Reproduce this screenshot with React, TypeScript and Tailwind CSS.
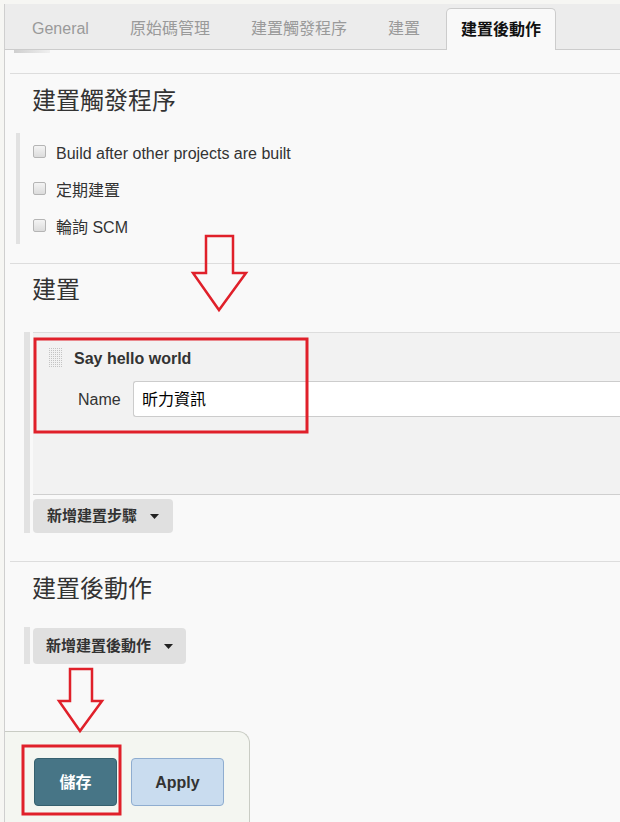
import React from "react";

const font = { fontFamily: '"Liberation Sans", "Noto Sans CJK TC", sans-serif' };

const Caret = () => (
  <svg width="9" height="5" viewBox="0 0 9 5" className="ml-[13px]">
    <path d="M0 0H9L4.5 5Z" fill="#222" />
  </svg>
);

const Checkbox = () => (
  <span className="inline-block h-[13px] w-[13px] rounded-[2px] border border-[#b5b5b5] bg-gradient-to-b from-[#f4f4f4] to-[#dcdcdc]" />
);

const DragHandle = () => (
  <svg width="14" height="20" viewBox="0 0 14 20">
    <defs>
      <pattern id="dots" width="2" height="2" patternUnits="userSpaceOnUse">
        <rect width="1" height="1" fill="#c4c4c4" />
      </pattern>
    </defs>
    <rect width="14" height="20" fill="url(#dots)" />
  </svg>
);

const Annotations = () => (
  <svg
    className="pointer-events-none absolute left-0 top-0"
    width="620"
    height="822"
    viewBox="0 0 620 822"
    fill="none"
    stroke="#e0202a"
  >
    <polygon
      points="206,236 233,236 233,273 246,273 219,310 193,273 206,273"
      strokeWidth="2.5"
    />
    <polygon
      points="70,669 92,669 92,701 102,701 80,731 59,701 70,701"
      strokeWidth="2.5"
    />
    <rect x="35" y="339" width="272" height="93" strokeWidth="3" />
    <rect x="23" y="746" width="97" height="68" strokeWidth="3" />
  </svg>
);

export default function App() {
  const tabs = ["General", "原始碼管理", "建置觸發程序", "建置"];

  return (
    <div className="relative h-[822px] w-[620px] overflow-hidden bg-[#f6f6f3] pt-[4px] pl-[4px]" style={font}>
      <div className="flex h-[818px] flex-col border-l border-[#cfcfcf] bg-[#f9f9f9]">
        {/* tab bar */}
        <div className="flex h-[46px] items-end gap-[11px] border-b border-[#cccccc] bg-[#ececec] pl-[12px]">
          {tabs.map((t) => (
            <div key={t} className="flex h-[41px] items-center px-[15px] text-[16px] text-[#9a9a9a]">
              {t}
            </div>
          ))}
          <div className="-mb-px flex h-[42px] items-center rounded-t-[5px] border border-b-0 border-[#cccccc] bg-[#f9f9f9] px-[14px] text-[16px] font-bold text-[#111]">
            建置後動作
          </div>
        </div>

        <div className="h-[23px] pl-[9px]">
          <div className="h-[3px] w-[36px] bg-gradient-to-r from-[#cfcfcf] to-[#f0f0f0]" />
        </div>

        {/* 建置觸發程序 */}
        <section className="ml-[5px] border-t border-[#dddddd] pt-[11px]">
          <h2 className="pl-[22px] text-[24px] leading-[32px] text-[#333]">建置觸發程序</h2>
          <div className="ml-[6px] mt-[16px] border-l-4 border-[#e2e2e2] pl-[13px]">
            {["Build after other projects are built", "定期建置", "輪詢 SCM"].map((l) => (
              <label key={l} className="flex h-[37px] items-center gap-[10px] text-[16px] text-[#333]">
                <Checkbox />
                <span className="pt-[4px]">{l}</span>
              </label>
            ))}
          </div>
          <div className="h-[19px]" />
        </section>

        {/* 建置 */}
        <section className="ml-[5px] border-t border-[#dddddd] pt-[10px]">
          <h2 className="pl-[22px] text-[24px] leading-[32px] text-[#333]">建置</h2>
          <div className="ml-[14px] mt-[26px] flex">
            <div className="w-[6px] bg-[#e2e2e2]" />
            <div className="ml-[3px] flex-1">
              <div className="h-[163px] border-y border-t-[#dddddd] border-b-[#cfcfcf] bg-[#f2f2f2]">
                <div className="mt-[15px] flex h-[20px] items-center pl-[16px]">
                  <DragHandle />
                  <span className="ml-[11px] pt-[1px] text-[16px] font-bold text-[#333]">Say hello world</span>
                </div>
                <div className="mt-[13px] flex h-[36px] items-center pl-[45px]">
                  <span className="w-[55px] pt-[1px] text-[16px] text-[#333]">Name</span>
                  <div className="flex h-[36px] flex-1 items-center rounded-l-[3px] border border-r-0 border-[#cccccc] bg-white pl-[8px] pt-[1px] text-[16px] text-black">
                    昕力資訊
                  </div>
                </div>
              </div>
              <button className="mt-[4px] flex h-[34px] items-center rounded-[4px] bg-[#e0e0e0] px-[14px] text-[15px] font-bold text-[#333]">
                新增建置步驟
                <Caret />
              </button>
            </div>
          </div>
          <div className="h-[28px]" />
        </section>

        {/* 建置後動作 */}
        <section className="ml-[5px] border-t border-[#dddddd] pt-[11px]">
          <h2 className="pl-[22px] text-[24px] leading-[32px] text-[#333]">建置後動作</h2>
          <div className="ml-[14px] mt-[22px] flex">
            <div className="w-[6px] bg-[#e2e2e2]" />
            <div className="ml-[3px] pt-[1px]">
              <button className="flex h-[36px] items-center rounded-[4px] bg-[#e0e0e0] px-[13px] text-[15px] font-bold text-[#333]">
                新增建置後動作
                <Caret />
              </button>
            </div>
          </div>
        </section>

        {/* bottom sticky bar */}
        <div className="mt-[67px] flex w-[245px] flex-1 gap-[14px] rounded-tr-[12px] border-r border-t border-[#c9ccc4] bg-[#f4f6f1] pl-[29px] pt-[26px]">
          <button className="flex h-[48px] w-[83px] items-center justify-center rounded-[4px] border border-[#35606e] bg-[#477586] pt-[1px] text-[16px] font-bold text-white">
            儲存
          </button>
          <button className="flex h-[48px] w-[93px] items-center justify-center rounded-[4px] border border-[#8fadd0] bg-[#c9dcef] pt-[1px] text-[16px] font-bold text-[#333]">
            Apply
          </button>
        </div>
      </div>
      <Annotations />
    </div>
  );
}
